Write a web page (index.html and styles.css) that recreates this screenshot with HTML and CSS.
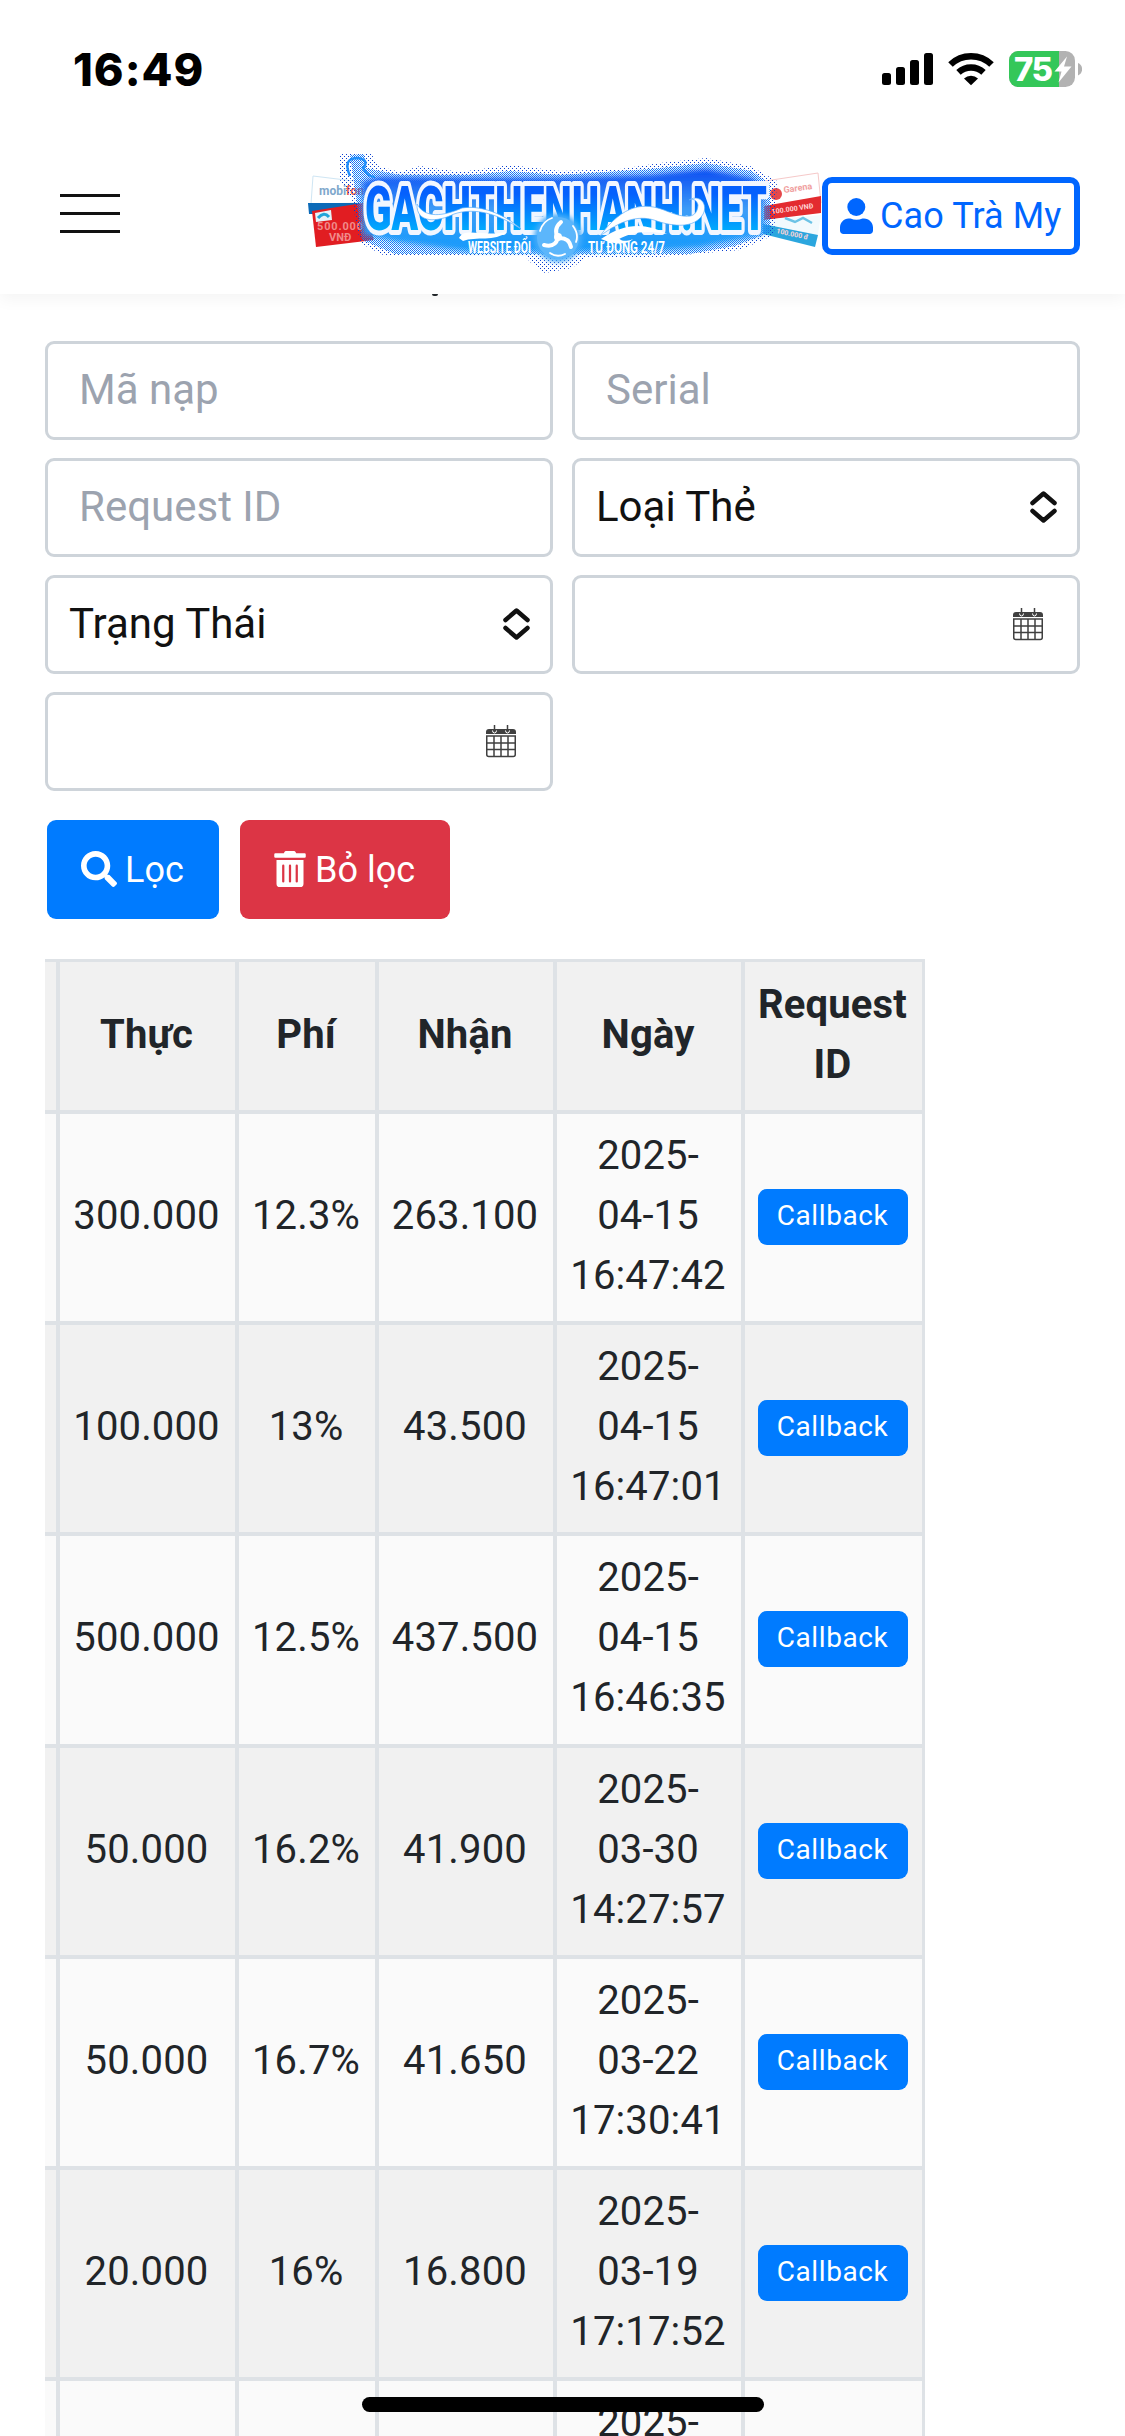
FILE: index.html
```html
<!DOCTYPE html>
<html lang="vi">
<head>
<meta charset="utf-8">
<title>Gachthenhanh.net</title>
<link rel="stylesheet" href="styles.css">
</head>
<body>
<div class="phone">
  <header class="top">
    <div class="status">
      <span class="time">16:49</span>
      <svg class="status-icons" width="202" height="40" viewBox="880 48 202 40">
        <rect x="882" y="73" width="9" height="12" rx="2.5"/>
        <rect x="896" y="67" width="9" height="18" rx="2.5"/>
        <rect x="910" y="60" width="9" height="25" rx="2.5"/>
        <rect x="924" y="53" width="9" height="32" rx="2.5"/>
        <g fill="none" stroke="#000" stroke-width="6.5">
          <path d="M950.5 64.5A29.5 29.5 0 0 1 991.500 64.500"/>
          <path d="M958.500 72.300A18.500 18.500 0 0 1 983.500 72.300"/>
        </g>
        <path d="M964 78.500a10.500 10.500 0 0 1 14 0L971 85.300Z"/>
        <clipPath id="bat"><rect x="1009" y="51" width="66" height="36" rx="9.500"/></clipPath>
        <g clip-path="url(#bat)">
          <rect x="1009" y="51" width="66" height="36" fill="#b2b2b2"/>
          <rect x="1009" y="51" width="50" height="36" fill="#34c759"/>
        </g>
        <path d="M1078 63c5.500 2 5.500 10.500 0 12.500Z" fill="#b2b2b2"/>
        <text class="level" x="1014" y="81" textLength="39">75</text>
        <path d="M1067 56.500L1054.500 71.500H1061.500L1058.500 82.500L1071.500 66.500H1064Z" fill="#fff"/>
      </svg>
    </div>
    <div class="nav">
      <div class="burger"><i></i><i></i><i></i></div>
      <svg class="logo" width="522" height="130" viewBox="300 148 522 130">
        <defs>
          <linearGradient id="ink" x1="0" y1="0" x2="0" y2="1">
            <stop offset=".3" stop-color="#0560fd"/><stop offset=".85" stop-color="#00b2fd"/>
          </linearGradient>
          <linearGradient id="glow" x1="0" y1="0" x2="0" y2="1">
            <stop offset="0" stop-color="#0a4bf2"/><stop offset=".5" stop-color="#3d9df8"/><stop offset="1" stop-color="#149afb"/>
          </linearGradient>
          <pattern id="dots" width="4" height="4" patternUnits="userSpaceOnUse">
            <rect width="1" height="1" fill="#0a3fd0"/><rect x="2" y="2" width="1" height="1" fill="#0a3fd0"/>
          </pattern>
          <pattern id="dense" width="2" height="2" patternUnits="userSpaceOnUse">
            <rect width="1" height="1" fill="#1a6df5"/><rect x="1" y="1" width="1" height="1" fill="#1a8cf8"/>
          </pattern>
          <filter id="soft" x="-10%" y="-20%" width="120%" height="140%"><feGaussianBlur stdDeviation="2.500"/></filter>
        </defs>
        <path fill="#fff" stroke="#cfe6f4" d="M313 176L362 182V203L311 204Z"/>
        <path fill="#0b6ab8" d="M308 203H360V214H309Z"/>
        <path fill="#e11d22" d="M312 211L363 203L374 240L316 247Z"/>
        <path fill="#e6f3f8" d="M315 213L331 210L332 220L316 222Z"/>
        <path fill="none" stroke="#21a5d8" stroke-width="3" d="M318 218q6-7 11-1"/>
        <text class="card-a" x="319" y="195">mobi<tspan fill="#e85a4f">fone</tspan></text>
        <text class="card-b" x="317" y="230" textLength="46">500.000</text>
        <text class="card-b" x="329" y="241">VNĐ</text>
        <path fill="#fff" stroke="#f6c9c9" d="M765 181L818 173L821 203L765 217Z"/>
        <path fill="#e32b2f" d="M764 206L821 196V213L764 220Z"/>
        <path fill="#f2fafd" d="M764 220L821 215L817 240L764 230Z"/>
        <path fill="#2ba6de" d="M763 224L818 235L815 247L763 234Z"/>
        <path fill="none" stroke="#6cc3e6" stroke-width="2.500" d="M785 218l10 4l8-4l9 5"/>
        <circle cx="776" cy="194" r="6" fill="#e5484b"/>
        <text class="card-c" x="784" y="193" transform="rotate(-8 784 193)">Garena</text>
        <text class="card-d" x="772" y="214" transform="rotate(-8 772 214)">100.000 VNĐ</text>
        <text class="card-d" x="776" y="233" transform="rotate(12 776 233)">100.000 đ</text>
        <path fill="url(#dots)" d="M340 153H371L378 166L400 172L420 166L460 172L510 165L560 171L620 169L660 163L706 158L750 166L777 181L774 235L740 250L660 257L585 258L572 268L545 273L530 262L525 256H385L360 243L352 200L340 180Z"/>
        <path fill="url(#dense)" d="M350 155L364 154L366 168L400 175L470 175L510 171L560 175L650 169L706 163L752 171L770 184V232L735 246L690 254H395L362 240L354 182Z"/>
        <path filter="url(#soft)" fill="url(#glow)" d="M362 182L380 177L470 178L560 178L650 175L706 169L752 178L764 187V234L700 247L640 251H470L400 242L364 234Z"/>
        <path fill="none" stroke="#1f8efb" stroke-width="2.500" d="M350 176q-8-18 8-18q12 2 5 10q5 9 12 9"/>
        <text class="brand" x="365" y="230" textLength="402" lengthAdjust="spacingAndGlyphs">GACHTHENHANH.NET</text>
        <path fill="#fff" stroke="#5aaef8" stroke-width=".7" d="M417 204C416 224 438 222 454 214C475 207 498 214 521 229C503 213 480 205 462 208C444 216 425 219 417 204Z"/>
        <path fill="#fff" stroke="#5aaef8" stroke-width=".7" d="M600 236C624 203 645 203 664 210C688 220 697 218 698 205C697 200 692 198 689 200C701 193 710 207 701 217C691 229 670 226 654 220C637 215 620 221 600 236Z"/>
        <path fill="#fff" d="M601 239C624 223 645 222 667 234C644 229 628 234 619 239C625 243 633 239 633 239C625 247 611 243 601 239ZM459 238C465 227 481 237 507 232C495 242 476 236 463 241Z"/>
        <text class="tag" x="468" y="253" textLength="63" lengthAdjust="spacingAndGlyphs">WEBSITE ĐỔI</text>
        <text class="tag" x="588" y="253" textLength="77" lengthAdjust="spacingAndGlyphs">TỰ ĐỘNG 24/7</text>
        <circle cx="558" cy="238" r="24" fill="#45abfa" filter="url(#soft)"/>
        <circle cx="558" cy="238" r="21" fill="#5cb6fb"/>
        <g fill="none" stroke="#fff" stroke-width="4" stroke-linecap="round">
          <path d="M558 238q-5-9 3-16M558 238q11-1 13 9M558 238q-3 10-14 7"/>
          <path stroke-width="1.800" d="M540 231q3-10 12-13M573 226q6 8 3 16M565 254q-8 4-15-1"/>
        </g>
        <circle cx="558" cy="237" r="4" fill="#fff"/>
      </svg>
      <div class="user">
        <svg width="33" height="36" viewBox="0 0 33 36" fill="#0066ff"><circle cx="16.300" cy="9" r="9"/><path d="M8.500 20.500h2c4 1.600 8 1.600 12 0h1.500c5 0 9 4 9 9V32.500c0 2-1.500 3.500-3.500 3.500H3.500C1.500 36 0 34.500 0 32.500V29.500c0-5 4-9 8.500-9Z"/></svg>
        <span>Cao Trà My</span>
      </div>
    </div>
  </header>

  <main class="page">
    <i class="peek"></i>
    <form class="filters">
      <div class="field hint">Mã nạp</div>
      <div class="field hint">Serial</div>
      <div class="field hint">Request ID</div>
      <div class="field pick"><span>Loại Thẻ</span><svg class="updown" width="27" height="34" viewBox="0 0 27 34"><path d="M2.500 13L13.500 3.500L24.500 13M2.500 21L13.500 30.500L24.500 21"/></svg></div>
      <div class="field pick"><span>Trạng Thái</span><svg class="updown" width="27" height="34" viewBox="0 0 27 34"><path d="M2.500 13L13.500 3.500L24.500 13M2.500 21L13.500 30.500L24.500 21"/></svg></div>
      <div class="field date"><svg width="30" height="34" viewBox="0 0 30 34"><path fill="#404040" d="M3 5H27a3 3 0 0 1 3 3V10H0V8a3 3 0 0 1 3-3Z"/><path fill="none" stroke="#404040" stroke-width="1.500" d="M.75 12V30.500a2 2 0 0 0 2 2H27.250a2 2 0 0 0 2-2V12ZM8 12V32M15 12V32M22 12V32M1 19H29M1 25.500H29M8.500 1V7M21.500 1V7"/><path fill="none" stroke="#fff" stroke-width="1" d="M6.500 6.500q0 2.500 2 2.500t2-2.500M19.500 6.500q0 2.500 2 2.500t2-2.500"/></svg></div>
      <div class="field date"><svg width="30" height="34" viewBox="0 0 30 34"><path fill="#404040" d="M3 5H27a3 3 0 0 1 3 3V10H0V8a3 3 0 0 1 3-3Z"/><path fill="none" stroke="#404040" stroke-width="1.500" d="M.75 12V30.500a2 2 0 0 0 2 2H27.250a2 2 0 0 0 2-2V12ZM8 12V32M15 12V32M22 12V32M1 19H29M1 25.500H29M8.500 1V7M21.500 1V7"/><path fill="none" stroke="#fff" stroke-width="1" d="M6.500 6.500q0 2.500 2 2.500t2-2.500M19.500 6.500q0 2.500 2 2.500t2-2.500"/></svg></div>
    </form>
    <div class="actions">
      <div class="btn go">
        <svg width="36" height="36" viewBox="0 0 512 512" fill="#fff"><path d="M505 442.700L405.300 343c-4.500-4.500-10.600-7-17-7H372c27.600-35.300 44-79.700 44-128C416 93.100 322.900 0 208 0S0 93.100 0 208s93.100 208 208 208c48.300 0 92.700-16.400 128-44v16.300c0 6.400 2.500 12.500 7 17l99.700 99.700c9.400 9.400 24.600 9.400 33.900 0l28.300-28.300c9.400-9.400 9.400-24.600.1-34zM208 336c-70.700 0-128-57.200-128-128 0-70.700 57.200-128 128-128 70.700 0 128 57.200 128 128 0 70.700-57.200 128-128 128z"/></svg>
        <span>Lọc</span>
      </div>
      <div class="btn clear">
        <svg width="32" height="36" viewBox="0 0 448 512" fill="#fff"><path d="M32 464a48 48 0 0 0 48 48h288a48 48 0 0 0 48-48V128H32zm272-256a16 16 0 0 1 32 0v224a16 16 0 0 1-32 0zm-96 0a16 16 0 0 1 32 0v224a16 16 0 0 1-32 0zm-96 0a16 16 0 0 1 32 0v224a16 16 0 0 1-32 0zM432 32H312l-9.400-18.700A24 24 0 0 0 281.100 0H166.800a23.700 23.700 0 0 0-21.400 13.300L136 32H16A16 16 0 0 0 0 48v32a16 16 0 0 0 16 16h416a16 16 0 0 0 16-16V48a16 16 0 0 0-16-16z"/></svg>
        <span>Bỏ lọc</span>
      </div>
    </div>
    <div class="table">
      <div class="row head"><b></b><b>Thực</b><b>Phí</b><b>Nhận</b><b>Ngày</b><b>Request<br>ID</b></div>
      <div class="row"><span></span><span>300.000</span><span>12.3%</span><span>263.100</span><span>2025-<br>04-15<br>16:47:42</span><span><a class="call">Callback</a></span></div>
      <div class="row odd"><span></span><span>100.000</span><span>13%</span><span>43.500</span><span>2025-<br>04-15<br>16:47:01</span><span><a class="call">Callback</a></span></div>
      <div class="row"><span></span><span>500.000</span><span>12.5%</span><span>437.500</span><span>2025-<br>04-15<br>16:46:35</span><span><a class="call">Callback</a></span></div>
      <div class="row odd"><span></span><span>50.000</span><span>16.2%</span><span>41.900</span><span>2025-<br>03-30<br>14:27:57</span><span><a class="call">Callback</a></span></div>
      <div class="row"><span></span><span>50.000</span><span>16.7%</span><span>41.650</span><span>2025-<br>03-22<br>17:30:41</span><span><a class="call">Callback</a></span></div>
      <div class="row odd"><span></span><span>20.000</span><span>16%</span><span>16.800</span><span>2025-<br>03-19<br>17:17:52</span><span><a class="call">Callback</a></span></div>
      <div class="row last"><span></span><span></span><span></span><span></span><span>2025-</span><span></span></div>
    </div>
  </main>
  <div class="home"></div>
</div>
</body>
</html>
```
FILE: styles.css
```css
* { box-sizing: border-box; }
body { margin: 0; background: #fff; font-family: Roboto, "Liberation Sans", sans-serif; color: #212529; }
.phone { position: relative; width: 1125px; height: 2436px; overflow: hidden; background: #fff; }

.top { height: 294px; background: #fff; box-shadow: 0 6px 15px rgba(0, 0, 0, .045); }
.status { display: flex; justify-content: space-between; align-items: flex-start; height: 148px; padding: 48px 43px 0 73px; }
.time { font: 800 45px/43px Inter, sans-serif; letter-spacing: 1px; color: #000; }
.level { font: 800 33px Inter, sans-serif; fill: #fff; }
.nav { display: flex; align-items: flex-start; padding: 0 45px 0 60px; }
.burger { display: flex; flex-direction: column; gap: 15px; width: 60px; margin: 46px 180px 0 0; }
.burger i { height: 3px; background: #111; }
.logo { display: block; flex: none; }
.user { display: flex; align-items: center; gap: 7px; width: 258px; height: 78px; margin-top: 29px; padding-left: 12px; border: 6px solid #06f; border-radius: 10px; color: #06f; font-size: 36px; line-height: 54px; letter-spacing: .1px; white-space: nowrap; }

.brand { font: 900 62px Roboto, sans-serif; fill: url(#ink); stroke: #f1f6ff; stroke-width: 10; stroke-linejoin: round; paint-order: stroke; }
.tag { font: 700 16px Roboto, sans-serif; fill: #fff; }
.card-a { font: 700 12px Roboto, sans-serif; fill: #7fa8cc; }
.card-b { font: 700 11px Roboto, sans-serif; fill: #f08a8a; }
.card-c { font: 700 9px Roboto, sans-serif; fill: #f0a0a0; }
.card-d { font: 700 7px Roboto, sans-serif; fill: #ffd5d5; }

.page { padding: 0 45px; }
.peek { display: block; width: 6px; height: 2px; margin-left: 387px; border-radius: 0 0 3px 3px; background: #212529; }
.filters { display: grid; grid-template-columns: 508px 508px; justify-content: space-between; grid-auto-rows: 99px; row-gap: 18px; margin-top: 45px; }
.field { display: flex; align-items: center; border: 3px solid #ced4da; border-radius: 9px; background: #fff; font-size: 42px; line-height: 60px; }
.hint { padding: 0 0 2px 31px; color: #9ca3af; }
.pick { justify-content: space-between; padding: 0 20px 2px 21px; color: #111; }
.updown { fill: none; stroke: #111; stroke-width: 4.5; stroke-linecap: round; stroke-linejoin: round; margin-top: 1px; }
.date { justify-content: flex-end; padding: 0 34px 1px 0; }

.actions { display: flex; gap: 21px; margin: 29px 0 0 2px; }
.btn { display: flex; align-items: center; height: 99px; border-radius: 9px; color: #fff; font-size: 36px; line-height: 54px; }
.btn svg { margin-bottom: 1px; }
.btn span { margin-top: 1px; }
.go { width: 172px; padding-left: 34px; gap: 8px; background: #007bff; }
.clear { width: 210px; padding-left: 34px; gap: 9px; background: #dc3545; }

.table { display: grid; grid-template-rows: 148px repeat(7, 207.2px); gap: 4px; width: 880px; margin-top: 40px; padding: 3px 3px 0 0; background: #dee2e6; font-size: 40px; line-height: 60px; letter-spacing: .15px; text-align: center; }
.row { display: grid; grid-template-columns: 11px 175px 136px 174px 184px 177px; gap: 4px; }
.row > * { display: flex; align-items: center; justify-content: center; padding: 0 2px 3px 0; background: #fafafa; }
.head > *, .odd > * { background: #f1f1f1; }
.row.last > * { align-items: flex-start; padding-top: 12px; }
.call { width: 150px; height: 56px; margin-top: 2px; border-radius: 9px; background: #007bff; color: #fff; font-size: 28px; line-height: 54px; letter-spacing: .6px; }

.home { position: absolute; left: 362px; top: 2397px; width: 402px; height: 15px; border-radius: 8px; background: #000; }
```
